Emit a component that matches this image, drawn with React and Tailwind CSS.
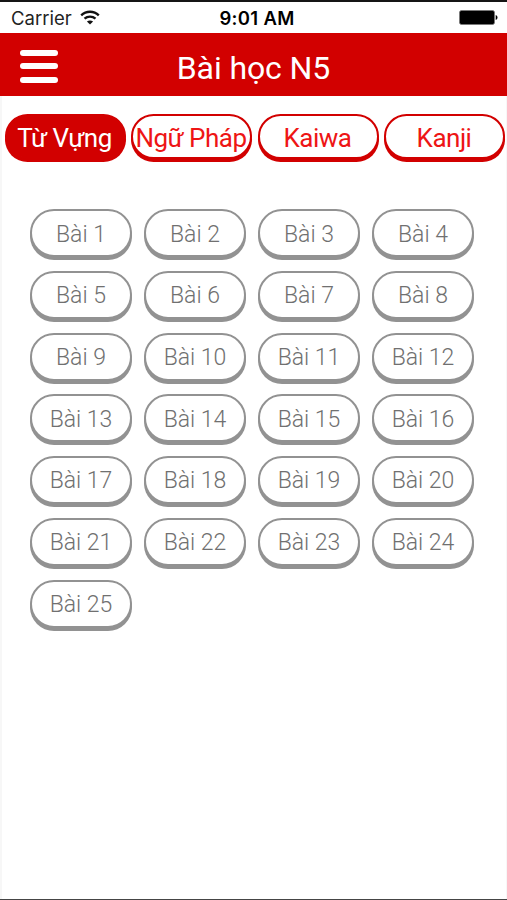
import React from 'react';

const tabs = ['Từ Vựng', 'Ngữ Pháp', 'Kaiwa', 'Kanji'];
const lessons = Array.from({ length: 25 }, (_, i) => i + 1);

export default function LessonPage() {
  return (
    <div className="flex flex-col w-[507px] h-[900px] bg-white overflow-hidden font-[Roboto,sans-serif]">
      <div className="h-[2px] bg-[#151515] shrink-0"></div>

      {/* Status Bar */}
      <div className="grid grid-cols-3 items-center h-[31px] pl-[11px] pr-[9px] pt-px shrink-0 font-[Inter,sans-serif] text-black">
        <div className="flex items-center gap-2">
          <span className="text-[18.5px] leading-none text-[#222]">Carrier</span>
          <svg className="w-5 h-[15px] -mt-px" viewBox="0 0 20 15" fill="none" stroke="#111" strokeWidth="2.4">
            <path d="M1.2 5.3C6.2 0.6 13.8 0.6 18.8 5.3" />
            <path d="M4.5 8.7C7.7 5.9 12.3 5.9 15.5 8.7" />
            <path d="M10 14.6L6.9 11.5C8.7 10 11.3 10 13.1 11.5Z" fill="#111" stroke="none" />
          </svg>
        </div>
        <span className="text-center text-[18.5px] leading-none tracking-[0.3px] font-semibold whitespace-nowrap pl-[5px]">9:01 AM</span>
        <svg className="w-[39px] h-[15px] justify-self-end -mt-px" viewBox="0 0 39 15">
          <rect x="0.5" y="0.5" width="35" height="14" rx="2" fill="#000" stroke="#777" strokeWidth="0.8" />
          <path d="M36.7 5C39.1 5.8 39.1 9.2 36.7 10Z" fill="#000" />
        </svg>
      </div>

      {/* Header */}
      <header className="grid grid-cols-[58px_1fr_58px] items-center h-[63px] bg-[#d20000] shrink-0">
        <button className="flex flex-col gap-[7.5px] pl-5 pt-[3px]">
          <span className="w-[38px] h-1.5 rounded-full bg-white"></span>
          <span className="w-[38px] h-1.5 rounded-full bg-white"></span>
          <span className="w-[38px] h-1.5 rounded-full bg-white"></span>
        </button>
        <h1 className="text-center text-[32px] leading-none tracking-[-0.1px] text-white pt-1.5">Bài học N5</h1>
      </header>

      <main className="flex-1 border-l-2 border-r border-[#f7f7f7]">
        {/* Tabs */}
        <nav className="flex gap-[5.5px] pl-[2.5px] pt-[18px]">
          {tabs.map((tab, i) => (
            <button
              key={tab}
              className={`flex items-center justify-center w-[121px] h-[45px] shrink-0 rounded-full border-2 border-[#d20000] shadow-[0_3px_0_#d20000] text-[26px] leading-none tracking-[-0.5px] whitespace-nowrap pt-0.5 pr-px ${
                i === 0 ? 'bg-[#d20000] text-white' : 'bg-white text-[#ee1515]'
              }`}
            >
              {tab}
            </button>
          ))}
        </nav>

        {/* Lessons */}
        <div className="grid grid-cols-[repeat(4,102px)] gap-x-3 gap-y-[13.7px] pl-7 pt-[50.4px]">
          {lessons.map((n) => (
            <button
              key={n}
              className="flex items-center justify-center h-12 rounded-full border-2 border-[#929292] shadow-[0_3px_0_#929292] bg-white text-[23px] leading-none font-light text-[#707070] pt-[1.5px]"
            >
              Bài {n}
            </button>
          ))}
        </div>
      </main>

      <div className="h-px bg-[#454545] shrink-0"></div>
    </div>
  );
}
